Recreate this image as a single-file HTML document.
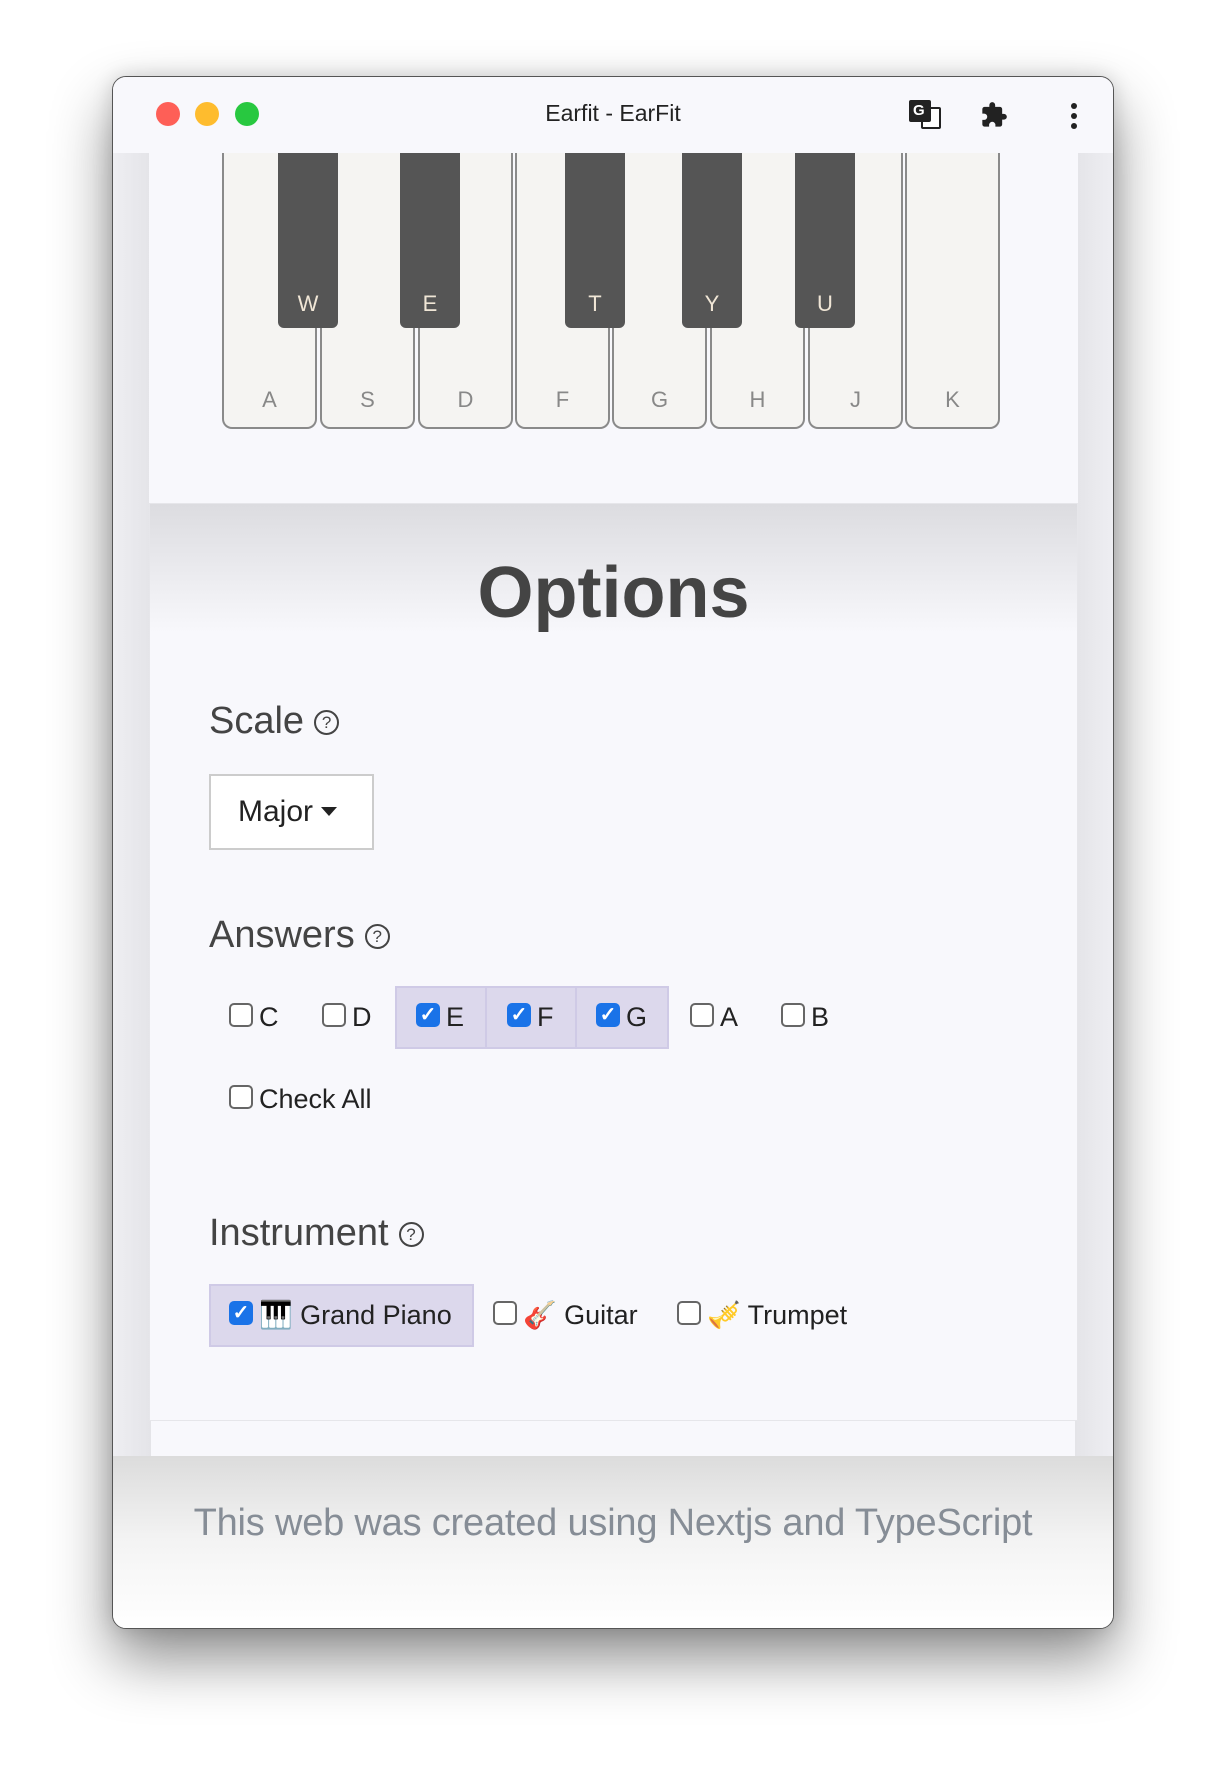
<!DOCTYPE html>
<html><head><meta charset="utf-8"><style>
*{box-sizing:border-box;margin:0;padding:0}
body{width:1224px;height:1774px;background:#fff;position:relative;overflow:hidden;font-family:"Liberation Sans",sans-serif}
.win{position:absolute;left:112px;top:76px;width:1002px;height:1553px;border-radius:14px;background:#f8f8fc;border:1px solid #555;overflow:hidden;box-shadow:0 30px 60px rgba(0,0,0,.45),0 0 20px rgba(0,0,0,.15)}
.tb{position:absolute;left:0;top:0;width:100%;height:76px;background:#f8f8fc}
.title{position:absolute;left:0;width:100%;top:23px;text-align:center;font-size:23px;color:#222}
.side{position:absolute;top:76px;width:38px;height:1380px;background:linear-gradient(90deg,#eeeef2,#e4e4e8)}
.card{position:absolute;left:36px;width:929px;background:#f8f8fc}
.wk{position:absolute;top:0;height:276px;width:95px;background:#f5f4f2;border:2px solid #8a8a8a;border-top:none;border-radius:0 0 10px 10px;text-align:center;color:#888;font-size:22px;padding-top:234px}
.bk{position:absolute;top:0;height:175px;width:60px;background:#555;border-radius:0 0 6px 6px;text-align:center;color:#f0e6d6;font-size:22px;padding-top:138px}
.h{position:absolute;left:59px;font-size:38px;color:#444;font-weight:300}
.q{display:inline-block;width:25px;height:25px;border:2px solid #444;border-radius:50%;font-size:17px;text-align:center;line-height:21px;vertical-align:5px;margin-left:10px}
.cb{display:inline-block;width:24px;height:24px;border:2px solid #666;border-radius:5px;background:#fff;vertical-align:middle;margin-right:6px;position:relative;top:-4px}
.cb.on{background:#1a73e8;border-color:#1a73e8;color:#fff;font-size:20px;line-height:20px;text-align:center;font-weight:bold}
.it{position:absolute;font-size:27px;color:#222;line-height:32px;white-space:nowrap}
.hl{position:absolute;background:#dcd8ec;border:2px solid #cfcae6}
</style></head><body>
<div class="win">
 <div class="tb"></div>
 <div class="title">Earfit - EarFit</div>
 <div style="position:absolute;left:43px;top:25px;width:24px;height:24px;border-radius:50%;background:#fe5f57"></div>
 <div style="position:absolute;left:82px;top:25px;width:24px;height:24px;border-radius:50%;background:#febc2e"></div>
 <div style="position:absolute;left:122px;top:25px;width:24px;height:24px;border-radius:50%;background:#28c840"></div>
 <div style="position:absolute;left:808px;top:30px;width:20px;height:22px;border:2px solid #222;background:#fff;border-radius:2px"></div>
 <div style="position:absolute;left:796px;top:23px;width:22px;height:22px;background:#222;border-radius:2px;color:#fff;font-size:15px;font-weight:bold;padding:2px 0 0 4px">G</div>
 <div style="position:absolute;left:867px;top:24px;width:26px;height:28px">
  <svg width="28" height="28" viewBox="0 0 24 24"><path fill="#222" d="M20.5 11H19V7a2 2 0 0 0-2-2h-4V3.5a2.5 2.5 0 0 0-5 0V5H4a2 2 0 0 0-2 2v3.8h1.5a2.7 2.7 0 0 1 0 5.4H2V20a2 2 0 0 0 2 2h3.8v-1.5a2.7 2.7 0 0 1 5.4 0V22H17a2 2 0 0 0 2-2v-4h1.5a2.5 2.5 0 0 0 0-5z"/></svg></div>
 <div style="position:absolute;left:958px;top:26px;width:6px;height:6px;border-radius:50%;background:#222;box-shadow:0 10px 0 #222,0 20px 0 #222"></div>

 <div class="side" style="left:0"></div>
 <div class="side" style="right:0;background:linear-gradient(270deg,#eeeef2,#e4e4e8)"></div>

 <div class="card" style="top:76px;height:350px">
  <div class="wk" style="left:73px">A</div>
  <div class="wk" style="left:171px">S</div>
  <div class="wk" style="left:269px">D</div>
  <div class="wk" style="left:366px">F</div>
  <div class="wk" style="left:463px">G</div>
  <div class="wk" style="left:561px">H</div>
  <div class="wk" style="left:659px">J</div>
  <div class="wk" style="left:756px">K</div>
  <div class="bk" style="left:129px">W</div>
  <div class="bk" style="left:251px">E</div>
  <div class="bk" style="left:416px">T</div>
  <div class="bk" style="left:533px">Y</div>
  <div class="bk" style="left:646px">U</div>
 </div>
 <div class="card" style="top:426px;height:918px;border:1px solid #e6e6ea;background:linear-gradient(#dcdce0,#f8f8fc 130px)">
  <div style="position:absolute;left:0;width:100%;top:48px;text-align:center;font-size:72px;font-weight:bold;color:#444">Options</div>
  <div class="h" style="top:196px">Scale<span class="q">?</span></div>
  <div style="position:absolute;left:59px;top:270px;width:165px;height:76px;border:2px solid #ccc;background:#fff;font-size:30px;color:#222;padding:19px 0 0 27px">Major <span style="display:inline-block;border-left:8px solid transparent;border-right:8px solid transparent;border-top:9px solid #222;vertical-align:5px"></span></div>
  <div class="h" style="top:410px">Answers<span class="q">?</span></div>
  <div class="hl" style="left:245px;top:482px;width:274px;height:63px"></div>
  <div style="position:absolute;left:335px;top:483px;width:2px;height:61px;background:#cfcae6"></div>
  <div style="position:absolute;left:425px;top:483px;width:2px;height:61px;background:#cfcae6"></div>
  <div class="it" style="left:79px;top:497px"><span class="cb"></span>C</div>
  <div class="it" style="left:172px;top:497px"><span class="cb"></span>D</div>
  <div class="it" style="left:266px;top:497px"><span class="cb on">✓</span>E</div>
  <div class="it" style="left:357px;top:497px"><span class="cb on">✓</span>F</div>
  <div class="it" style="left:446px;top:497px"><span class="cb on">✓</span>G</div>
  <div class="it" style="left:540px;top:497px"><span class="cb"></span>A</div>
  <div class="it" style="left:631px;top:497px"><span class="cb"></span>B</div>
  <div class="it" style="left:79px;top:579px"><span class="cb"></span>Check All</div>
  <div class="h" style="top:708px">Instrument<span class="q">?</span></div>
  <div class="hl" style="left:59px;top:780px;width:265px;height:63px"></div>
  <div class="it" style="left:79px;top:795px"><span class="cb on">✓</span>🎹 Grand Piano</div>
  <div class="it" style="left:343px;top:795px"><span class="cb"></span>🎸 Guitar</div>
  <div class="it" style="left:527px;top:795px"><span class="cb"></span>🎺 Trumpet</div>
 </div>
 <div style="position:absolute;left:0;top:1379px;width:100%;height:174px;background:linear-gradient(#dcdcdc,#f4f4f4 50%,#fff)">
  <div style="position:absolute;left:0;width:100%;top:46px;text-align:center;font-size:38px;letter-spacing:-0.2px;color:#868d96">This web was created using Nextjs and TypeScript</div>
 </div>
</div>
</body></html>
